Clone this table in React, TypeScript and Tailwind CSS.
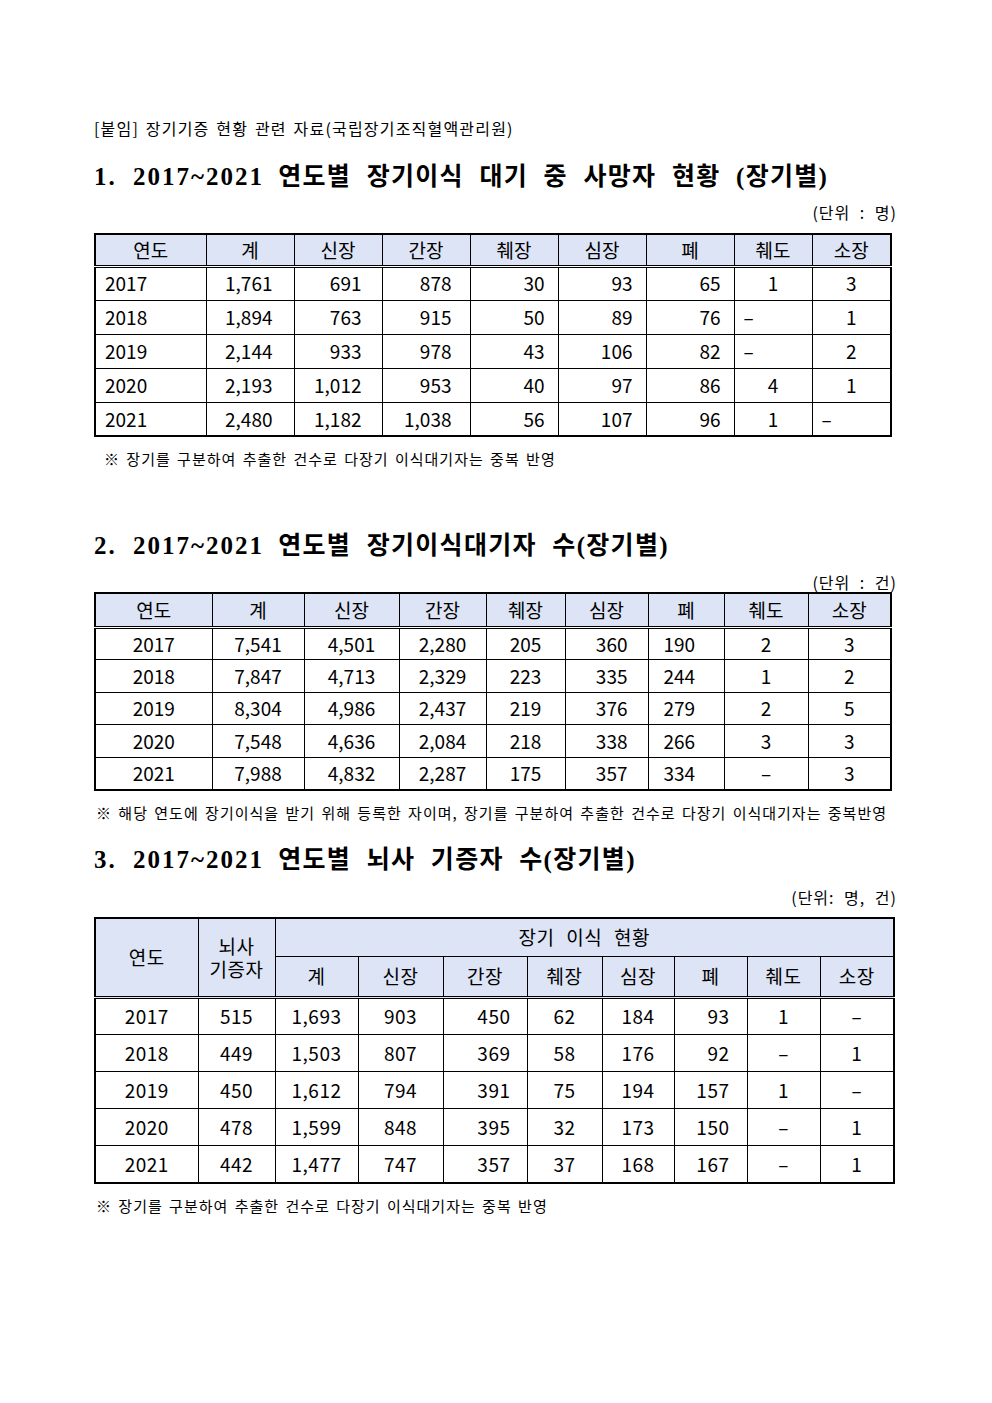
import type { ReactNode } from 'react';

const DASH = '–';

const headers = ['연도', '계', '신장', '간장', '췌장', '심장', '폐', '췌도', '소장'];

const waitDeaths = [
  ['2017', '1,761', '691', '878', '30', '93', '65', '1', '3'],
  ['2018', '1,894', '763', '915', '50', '89', '76', DASH, '1'],
  ['2019', '2,144', '933', '978', '43', '106', '82', DASH, '2'],
  ['2020', '2,193', '1,012', '953', '40', '97', '86', '4', '1'],
  ['2021', '2,480', '1,182', '1,038', '56', '107', '96', '1', DASH],
];

const waiting = [
  ['2017', '7,541', '4,501', '2,280', '205', '360', '190', '2', '3'],
  ['2018', '7,847', '4,713', '2,329', '223', '335', '244', '1', '2'],
  ['2019', '8,304', '4,986', '2,437', '219', '376', '279', '2', '5'],
  ['2020', '7,548', '4,636', '2,084', '218', '338', '266', '3', '3'],
  ['2021', '7,988', '4,832', '2,287', '175', '357', '334', DASH, '3'],
];

const donors = [
  ['2017', '515', '1,693', '903', '450', '62', '184', '93', '1', DASH],
  ['2018', '449', '1,503', '807', '369', '58', '176', '92', DASH, '1'],
  ['2019', '450', '1,612', '794', '391', '75', '194', '157', '1', DASH],
  ['2020', '478', '1,599', '848', '395', '32', '173', '150', DASH, '1'],
  ['2021', '442', '1,477', '747', '357', '37', '168', '167', DASH, '1'],
];

const w1 = [111, 88, 88, 88, 88, 88, 88, 78, 79];
const w2 = [117, 92, 95, 87, 79, 83, 76, 84, 83];
const w3 = [103, 77, 83, 85, 84, 75, 72, 73, 73, 74];

// alignment per column
const align1 = (col: number, v: string) => {
  if (col === 0) return 'text-left pl-[9px]';
  if (col === 1) return 'text-right pr-[21px]';
  if (col === 2) return 'text-right pr-[20px]';
  if (col === 3) return 'text-right pr-[18px]';
  if (col <= 6) return 'text-right pr-[13px]';
  return v === DASH ? 'text-left pl-[9px]' : 'text-center';
};

const align2 = (col: number) => {
  if (col === 5) return 'text-right pr-[20px]';
  if (col === 6) return 'text-left pl-[15px]';
  return 'text-center';
};

const align3 = (col: number) => {
  if (col === 4) return 'text-right pr-[16px]';
  if (col === 7) return 'text-right pr-[17px]';
  return 'text-center';
};

const th = 'border border-black bg-[#dce4f5] font-normal text-center p-0';
const td = 'border border-black p-0';
const dbl = '[border-bottom-style:double] border-b-[3px]';

function Title({ num, children }: { num: string; children: ReactNode }) {
  return (
    <h2 className="font-['Liberation_Serif','Noto_Sans_CJK_KR',serif] text-[25px] leading-[30px] font-bold text-black [word-spacing:8px] whitespace-nowrap">
      <span className="tracking-[2px]">{num}</span> <span className="tracking-[1.3px]">{children}</span>
    </h2>
  );
}

function Cols({ widths }: { widths: number[] }) {
  return (
    <colgroup>
      {widths.map((w, i) => (
        <col key={i} style={{ width: w }} />
      ))}
    </colgroup>
  );
}

export default function App() {
  return (
    <div className="min-h-screen bg-white text-black font-['Noto_Sans_CJK_KR',sans-serif] pt-[118px] pl-[94px]">
      <div className="w-[803px]">
        <p className="text-[16px] leading-[20px] tracking-[1.2px] [word-spacing:2px]">
          [붙임] 장기기증 현황 관련 자료(국립장기조직혈액관리원)
        </p>

        {/* 1 */}
        <div className="mt-[24px]">
          <Title num="1. 2017~2021">연도별 장기이식 대기 중 사망자 현황 (장기별)</Title>
        </div>
        <p className="mt-[10px] text-right text-[16px] leading-[20px] tracking-[1px] [word-spacing:5px]">(단위 : 명)</p>
        <table className="mt-[11px] w-[796px] table-fixed border-collapse border-2 border-black text-[19px]">
          <Cols widths={w1} />
          <thead>
            <tr className="h-[32px]">
              {headers.map((h) => (
                <th key={h} className={`${th} ${dbl}`}>
                  {h}
                </th>
              ))}
            </tr>
          </thead>
          <tbody>
            {waitDeaths.map((r) => (
              <tr key={r[0]} className="h-[34px]">
                {r.map((v, i) => (
                  <td key={i} className={`${td} ${align1(i, v)}`}>
                    {v}
                  </td>
                ))}
              </tr>
            ))}
          </tbody>
        </table>
        <p className="mt-[12px] pl-[10px] text-[15px] leading-[20px] tracking-[1px] [word-spacing:2px]">
          ※ 장기를 구분하여 추출한 건수로 다장기 이식대기자는 중복 반영
        </p>

        {/* 2 */}
        <div className="mt-[62px]">
          <Title num="2. 2017~2021">연도별 장기이식대기자 수(장기별)</Title>
        </div>
        <p className="mt-[11px] text-right text-[16px] leading-[20px] tracking-[1px] [word-spacing:5px]">(단위 : 건)</p>
        <table className="w-[796px] table-fixed border-collapse border-2 border-black text-[19px]">
          <Cols widths={w2} />
          <thead>
            <tr className="h-[34px]">
              {headers.map((h) => (
                <th key={h} className={`${th} ${dbl}`}>
                  {h}
                </th>
              ))}
            </tr>
          </thead>
          <tbody>
            {waiting.map((r) => (
              <tr key={r[0]} className="h-[32.5px]">
                {r.map((v, i) => (
                  <td key={i} className={`${td} ${align2(i)}`}>
                    {v}
                  </td>
                ))}
              </tr>
            ))}
          </tbody>
        </table>
        <p className="mt-[12px] pl-[2px] text-[15px] leading-[20px] whitespace-nowrap tracking-[1px] [word-spacing:2px]">
          ※ 해당 연도에 장기이식을 받기 위해 등록한 자이며, 장기를 구분하여 추출한 건수로 다장기 이식대기자는 중복반영
        </p>

        {/* 3 */}
        <div className="mt-[22px]">
          <Title num="3. 2017~2021">연도별 뇌사 기증자 수(장기별)</Title>
        </div>
        <p className="mt-[12px] text-right text-[16px] leading-[20px] tracking-[1px] [word-spacing:5px]">(단위: 명, 건)</p>
        <table className="mt-[10px] w-[799px] table-fixed border-collapse border-2 border-black text-[19px] tracking-[0.5px]">
          <Cols widths={w3} />
          <thead>
            <tr className="h-[39px]">
              <th rowSpan={2} className={`${th} ${dbl}`}>
                연도
              </th>
              <th rowSpan={2} className={`${th} ${dbl} leading-[23px]`}>
                뇌사
                <br />
                기증자
              </th>
              <th colSpan={8} className={`${th} [word-spacing:7px]`}>
                장기 이식 현황
              </th>
            </tr>
            <tr className="h-[41px]">
              {headers.slice(1).map((h) => (
                <th key={h} className={`${th} ${dbl}`}>
                  {h}
                </th>
              ))}
            </tr>
          </thead>
          <tbody>
            {donors.map((r) => (
              <tr key={r[0]} className="h-[37px]">
                {r.map((v, i) => (
                  <td key={i} className={`${td} ${align3(i)}`}>
                    {v}
                  </td>
                ))}
              </tr>
            ))}
          </tbody>
        </table>
        <p className="mt-[12px] pl-[2px] text-[15px] leading-[20px] tracking-[1px] [word-spacing:2px]">
          ※ 장기를 구분하여 추출한 건수로 다장기 이식대기자는 중복 반영
        </p>
      </div>
    </div>
  );
}
